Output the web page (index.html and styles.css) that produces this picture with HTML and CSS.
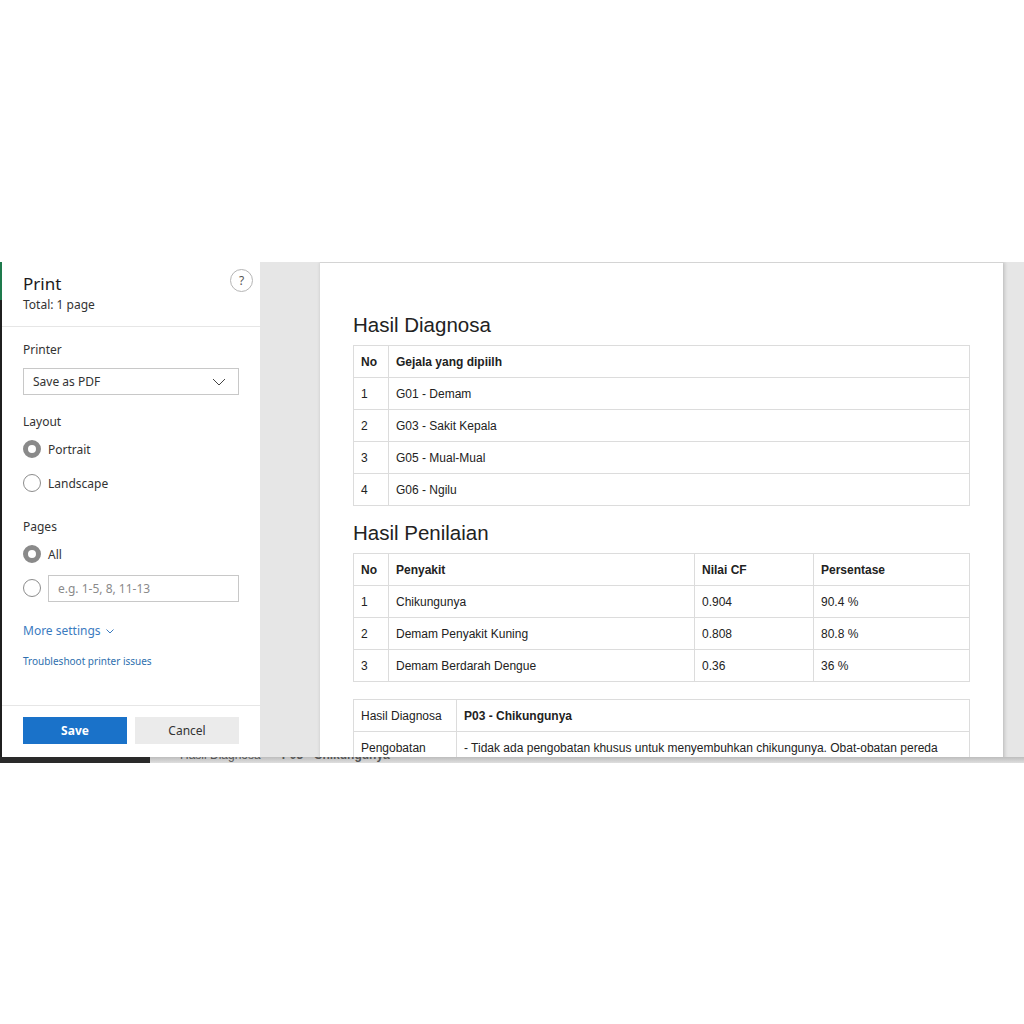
FILE: index.html
```html
<!DOCTYPE html>
<html lang="id">
<head>
  <meta charset="UTF-8" />
  <title>Print - Hasil Diagnosa</title>
  <link rel="stylesheet" href="styles.css">
</head>
<body>
  <div class="window">
    <div class="panel">
      <div class="panel-head">
        <div class="title">Print</div>
        <div class="total">Total: 1 page</div>
        <div class="help">?</div>
      </div>

      <div class="panel-body">
        <div class="label">Printer</div>
        <div class="select">
          <span>Save as PDF</span>
          <svg width="14" height="8" viewBox="0 0 14 8"><polyline points="1,1 7,7 13,1" fill="none" stroke="#444" stroke-width="1"/></svg>
        </div>

        <div class="label gap">Layout</div>
        <div class="radio-row"><span class="radio on"></span>Portrait</div>
        <div class="radio-row"><span class="radio"></span>Landscape</div>

        <div class="label gap">Pages</div>
        <div class="radio-row"><span class="radio on"></span>All</div>
        <div class="radio-row"><span class="radio"></span><div class="range">e.g. 1-5, 8, 11-13</div></div>

        <div class="more">More settings
          <svg width="8" height="5" viewBox="0 0 8 5"><polyline points="0.5,0.5 4,4 7.5,0.5" fill="none" stroke="#3b7bbf" stroke-width="1"/></svg>
        </div>
        <div class="trouble">Troubleshoot printer issues</div>
      </div>

      <div class="panel-foot">
        <button class="btn save">Save</button>
        <button class="btn cancel">Cancel</button>
      </div>
    </div>

    <div class="preview">
      <div class="page">
        <h2>Hasil Diagnosa</h2>
        <table>
          <tr><th class="no">No</th><th>Gejala yang dipiilh</th></tr>
          <tr><td>1</td><td>G01 - Demam</td></tr>
          <tr><td>2</td><td>G03 - Sakit Kepala</td></tr>
          <tr><td>3</td><td>G05 - Mual-Mual</td></tr>
          <tr><td>4</td><td>G06 - Ngilu</td></tr>
        </table>

        <h2 class="second">Hasil Penilaian</h2>
        <table>
          <tr><th class="no">No</th><th class="penyakit">Penyakit</th><th class="cf">Nilai CF</th><th>Persentase</th></tr>
          <tr><td>1</td><td>Chikungunya</td><td>0.904</td><td>90.4 %</td></tr>
          <tr><td>2</td><td>Demam Penyakit Kuning</td><td>0.808</td><td>80.8 %</td></tr>
          <tr><td>3</td><td>Demam Berdarah Dengue</td><td>0.36</td><td>36 %</td></tr>
        </table>

        <table class="result">
          <tr><td class="key">Hasil Diagnosa</td><td><b>P03 - Chikungunya</b></td></tr>
          <tr><td class="key">Pengobatan</td><td class="long">- Tidak ada pengobatan khusus untuk menyembuhkan chikungunya. Obat-obatan pereda</td></tr>
        </table>
      </div>
    </div>
  </div>

  <div class="underlay">
    <div class="dark"></div>
    <div class="under-text"><span>Hasil Diagnosa</span><b>P03 - Chikungunya</b></div>
  </div>
</body>
</html>
```

FILE: styles.css
```css
body {
  margin: 0;
  background: #fff;
  font-family: 'Noto Sans', 'Open Sans', sans-serif;
  color: #262626;
}

.window {
  margin-top: 262px;
  height: 495px;
  display: flex;
  overflow: hidden;
}

/* left print panel */
.panel {
  width: 258px;
  border-left: 2px solid #1f1f1f;
  background: #fff;
  display: flex;
  flex-direction: column;
  position: relative;
}

.panel::before {
  content: "";
  position: absolute;
  left: -2px;
  top: 0;
  width: 2px;
  height: 38px;
  background: #1e7a4c;
}

.panel-head {
  position: relative;
  padding: 11px 21px 14px;
  border-bottom: 1px solid #e6e6e6;
}

.title {
  font-size: 17px;
  line-height: 22px;
  color: #1b1b1b;
}

.total {
  margin-top: 2px;
  font-size: 12px;
  line-height: 15px;
  color: #333;
}

.help {
  position: absolute;
  top: 7px;
  right: 7px;
  width: 21px;
  height: 21px;
  border: 1px solid #b5b5b5;
  border-radius: 50%;
  font-size: 12px;
  line-height: 21px;
  text-align: center;
  color: #555;
}

.panel-body {
  padding: 15px 21px 0;
}

.label {
  font-size: 12px;
  line-height: 16px;
  color: #333;
}

.label.gap {
  margin-top: 19px;
}

.select {
  margin-top: 10px;
  height: 25px;
  border: 1px solid #c8c8c8;
  display: flex;
  align-items: center;
  justify-content: space-between;
  padding: 0 12px 0 9px;
  font-size: 12px;
  color: #333;
}

.radio-row {
  height: 34px;
  display: flex;
  align-items: center;
  gap: 7px;
  font-size: 12px;
  color: #333;
}

.label + .radio-row {
  margin-top: 2px;
}

.radio {
  width: 18px;
  height: 18px;
  border: 1px solid #8c8c8c;
  border-radius: 50%;
  flex: none;
  box-sizing: border-box;
}

.radio.on {
  border: 5px solid #8a8a8a;
}

.range {
  flex: 1;
  height: 25px;
  border: 1px solid #c8c8c8;
  padding-left: 9px;
  line-height: 25px;
  color: #8a8a8a;
}

.more {
  margin-top: 18px;
  font-size: 12px;
  line-height: 16px;
  color: #3b7bbf;
}

.more svg {
  margin-left: 2px;
  vertical-align: middle;
}

.trouble {
  margin-top: 15px;
  font-size: 10px;
  line-height: 14px;
  color: #2e6fae;
}

.panel-foot {
  margin-top: auto;
  border-top: 1px solid #e6e6e6;
  padding: 11px 21px 13px;
  display: grid;
  grid-template-columns: 1fr 1fr;
  gap: 8px;
}

.btn {
  height: 27px;
  border: none;
  font-family: inherit;
  font-size: 12px;
}

.save {
  background: #1a72c9;
  color: #fff;
  font-weight: bold;
}

.cancel {
  background: #ebebeb;
  color: #333;
}

/* preview area */
.preview {
  flex: 1;
  background: #e6e6e6;
  padding: 0 21px 0 60px;
}

.page {
  height: 100%;
  background: #fff;
  border-top: 1px solid #d4d4d4;
  box-shadow: 1px 0 4px rgba(0, 0, 0, 0.22);
  padding: 50px 33px 0;
  overflow: hidden;
  font-family: 'Liberation Sans', Arial, sans-serif;
  color: #222;
}

h2 {
  margin: 0 0 8px;
  font-size: 20.5px;
  line-height: 24px;
  font-weight: normal;
}

h2.second {
  margin-top: 15px;
}

table {
  width: 100%;
  border-collapse: collapse;
  font-size: 12px;
}

th, td {
  border: 1px solid #dcdcdc;
  height: 31px;
  padding: 0 7px;
  text-align: left;
  vertical-align: middle;
}

th.no {
  width: 20px;
}

th.penyakit {
  width: 291px;
}

th.cf {
  width: 104px;
}

table.result {
  margin-top: 17px;
}

td.key {
  width: 88px;
}

td.long {
  white-space: nowrap;
}

/* page behind the dialog */
.underlay {
  height: 6px;
  display: flex;
  overflow: hidden;
  background: linear-gradient(#bdbdbd, #dedede);
}

.dark {
  width: 150px;
  background: #2a2a2a;
}

.under-text {
  margin-top: -9px;
  padding-left: 30px;
  white-space: nowrap;
  font-family: 'Liberation Sans', Arial, sans-serif;
  font-size: 12px;
  line-height: 14px;
  color: #555;
}

.under-text b {
  margin-left: 21px;
}
```
